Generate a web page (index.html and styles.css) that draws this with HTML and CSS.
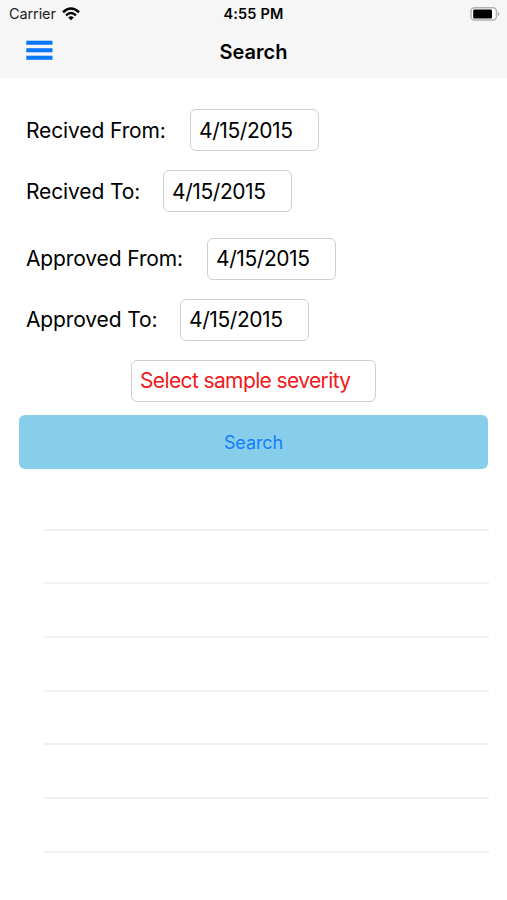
FILE: index.html
```html
<!DOCTYPE html>
<html lang="en">
<head>
    <meta charset="UTF-8">
    <title>Search</title>
    <link rel="stylesheet" href="styles.css">
</head>
<body>
    <header class="header">
        <div class="status-bar">
            <div class="carrier">
                <span>Carrier</span>
                <svg class="wifi" viewBox="0 0 18 14" width="18" height="14">
                    <path d="M1 5.2 Q9 -2.2 17 5.2" fill="none" stroke="#000" stroke-width="2.6"/>
                    <path d="M4 8.3 Q9 3.8 14 8.3" fill="none" stroke="#000" stroke-width="2.4"/>
                    <path d="M6.2 10.4 Q9 8 11.8 10.4 L9 13.3 Z"/>
                </svg>
            </div>
            <div class="clock">4:55 PM</div>
            <svg class="battery" viewBox="0 0 31 14" width="31" height="14">
                <rect x="1" y="0.8" width="25.4" height="12.2" rx="3.5" fill="#fff" stroke="#b0b0b0" stroke-width="1.4"/>
                <rect x="3.2" y="2.6" width="18.8" height="8.8" rx="1.2"/>
                <path d="M27.8 4.5 Q31.2 7 27.8 9.5 Z" fill="#b0b0b0"/>
            </svg>
        </div>
        <div class="nav-bar">
            <button class="menu-btn" aria-label="Menu">
                <svg viewBox="0 0 27 20" width="27" height="20" fill="#0a78fa">
                    <rect x="0.3" y="0.7" width="26.2" height="4.1"/>
                    <rect x="0.3" y="8.2" width="26.2" height="4.1"/>
                    <rect x="0.3" y="15.7" width="26.2" height="4.1"/>
                </svg>
            </button>
            <h1 class="title">Search</h1>
        </div>
    </header>

    <main>
        <form class="search-form">
            <div class="row">
                <label class="label received-from" for="received-from">Recived From:</label>
                <input class="date" id="received-from" type="text" value="4/15/2015">
            </div>
            <div class="row">
                <label class="label received-to" for="received-to">Recived To:</label>
                <input class="date" id="received-to" type="text" value="4/15/2015">
            </div>
            <div class="row group">
                <label class="label approved-from" for="approved-from">Approved From:</label>
                <input class="date" id="approved-from" type="text" value="4/15/2015">
            </div>
            <div class="row">
                <label class="label approved-to" for="approved-to">Approved To:</label>
                <input class="date" id="approved-to" type="text" value="4/15/2015">
            </div>
            <input class="severity" type="text" placeholder="Select sample severity">
            <button class="search-btn" type="button">Search</button>
        </form>

        <ul class="results">
            <li></li>
            <li></li>
            <li></li>
            <li></li>
            <li></li>
            <li></li>
            <li></li>
        </ul>
    </main>
</body>
</html>
```
FILE: styles.css
```css
* {
    box-sizing: border-box;
}

body {
    margin: 0;
    min-height: 900px;
    background-color: #ffffff;
    color: #000000;
    font-family: Inter, Arial, sans-serif;
}

.header {
    height: 78px;
    background-color: #f7f6f7;
}

.status-bar {
    display: grid;
    grid-template-columns: 1fr auto 1fr;
    align-items: center;
    height: 27px;
    padding: 0 6px 0 9px;
}

.carrier {
    display: flex;
    align-items: center;
    gap: 6px;
    font-size: 14.5px;
    letter-spacing: -0.1px;
    color: #222222;
}

.clock {
    margin-right: 3px;
    font-size: 14.5px;
    font-weight: 600;
    letter-spacing: 0.15px;
}

.battery {
    justify-self: end;
}

.nav-bar {
    display: grid;
    grid-template-columns: 1fr auto 1fr;
    align-items: center;
    height: 49px;
    padding: 0 26px;
}

.menu-btn {
    display: flex;
    width: 27px;
    margin-top: -3px;
    padding: 0;
    border: none;
    background: none;
}

.title {
    margin: 0;
    font-size: 20px;
    font-weight: 600;
}

.search-form {
    display: flex;
    flex-direction: column;
    padding: 31px 19px 0;
}

.row {
    display: flex;
    align-items: center;
    height: 42px;
    margin-bottom: 19px;
    padding-left: 7px;
}

.row.group {
    margin-top: 7px;
}

.label {
    font-size: 21px;
    letter-spacing: -0.12px;
    white-space: nowrap;
}

.received-from {
    width: 164px;
}

.received-to {
    width: 137px;
}

.approved-from {
    width: 181px;
}

.approved-to {
    width: 154px;
}

.group .label,
.group ~ .row .label {
    padding-bottom: 2px;
}

.date,
.severity {
    height: 42px;
    padding: 0 8px;
    border: 1px solid #cfcfcf;
    border-radius: 6px;
    background-color: #ffffff;
    font-family: inherit;
    font-size: 21px;
    letter-spacing: -0.42px;
    color: #000000;
}

.date {
    width: 129px;
}

.group .date,
.group ~ .row .date,
.severity {
    padding-bottom: 2px;
}

.severity {
    align-self: center;
    width: 245px;
    letter-spacing: -0.62px;
}

.severity::placeholder {
    color: #f01818;
    opacity: 1;
}

.search-btn {
    height: 54px;
    margin-top: 13px;
    border: none;
    border-radius: 6px;
    background-color: #87ceeb;
    color: #147efb;
    font-family: inherit;
    font-size: 18px;
    letter-spacing: -0.1px;
}

.results {
    margin: 8px 18px 0 44px;
    padding: 0;
    list-style: none;
}

.results li {
    height: 53.7px;
    border-bottom: 2px solid #f1f1f1;
}
```
